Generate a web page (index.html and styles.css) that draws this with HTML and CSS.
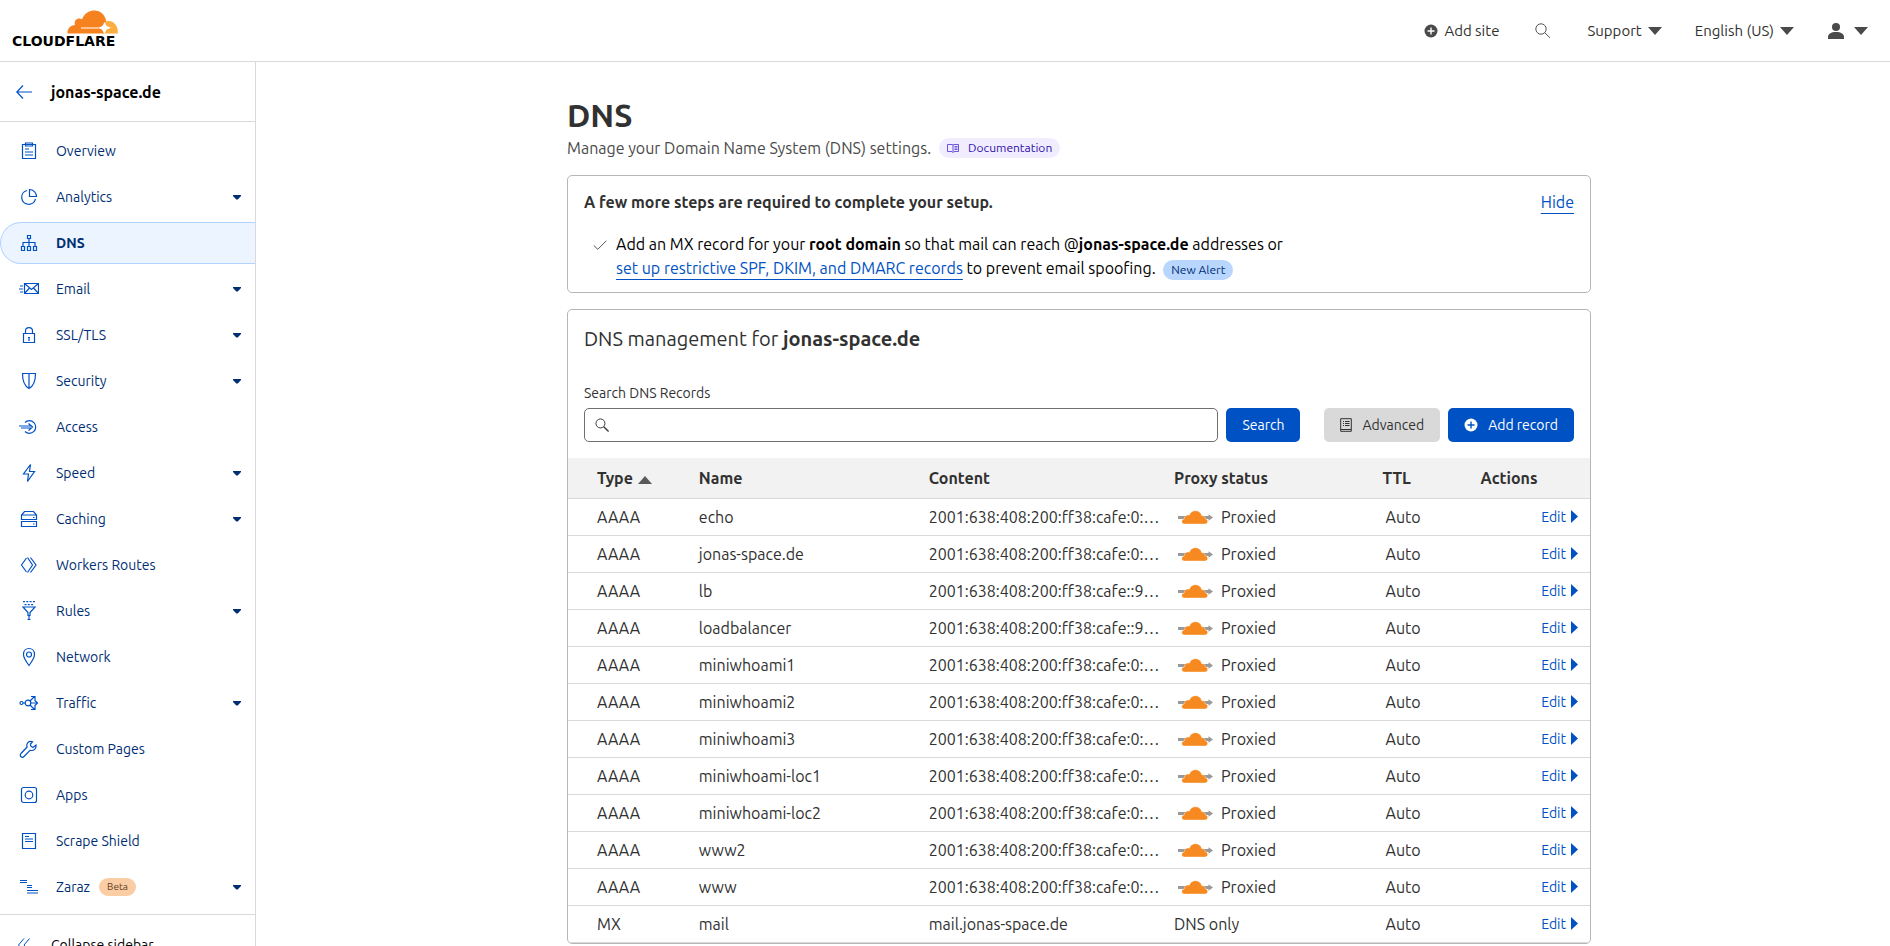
FILE: index.html
```
<!DOCTYPE html>
<html lang="en">
<head>
<meta charset="utf-8">
<title>DNS | jonas-space.de | Cloudflare</title>
<link rel="stylesheet" href="styles.css">
</head>
<body>
<svg class="sprite" aria-hidden="true">
  <symbol id="i-caret" viewBox="0 0 8 5"><path d="M0 0h8v1L4.700 4.500H3.300L0 1z"/></symbol>
  <symbol id="i-down" viewBox="0 0 14 8"><path d="M0 0h14L7 8z"/></symbol>
  <symbol id="i-plus" viewBox="0 0 14 14"><circle cx="7" cy="7" r="6.500"/><path d="M7 3.500v7M3.500 7h7" fill="none" stroke="var(--plus)" stroke-width="1.400"/></symbol>
  <symbol id="i-search" viewBox="0 0 16 16"><circle cx="5.800" cy="5.800" r="4.800" fill="none" stroke="currentColor"/><path d="M9.300 9.300l5.200 5" fill="none" stroke="currentColor" stroke-width="1.400"/></symbol>
  <symbol id="i-cloud" viewBox="0 0 35 14">
    <path d="M0 6h31v3H0zM30.500 4.200L35 7.500l-4.500 3.300z" fill="#999"/>
    <path d="M6.500 14C3 14 2.800 9.300 6.300 9c-.2-2.800 2.500-4.600 5-3.700C13-1 22.500-.8 23.800 5.800c2.400-.5 3.500 1.200 3.300 2.900 3.700.4 3.300 5.300-.1 5.300z" fill="#f6891f" stroke="#fff" stroke-width=".4"/>
  </symbol>
  <symbol id="i-right" viewBox="0 0 7 13"><path d="M0 0l7 6.500L0 13z"/></symbol>
</svg>

<div class="app">
  <header class="topbar">
    <a class="logo" href="#" aria-label="Cloudflare">
      <svg class="logo-cloud" viewBox="0 0 52 24" aria-hidden="true">
        <path d="M.5 23.500C.2 18.500 3.500 15.200 8 15 6.500 10 11 7 15 9.300 17.500 2.500 23 .4 27.500.4c6 0 10 4 11.500 9.600l-1.500 13.500z" fill="#f6821f"/>
        <path d="M36 23.500l3.500-12.700C46 10.500 51.500 15 50.700 23.500z" fill="#fbad41"/>
        <path d="M14 17.500h18l3.500-1.500 2-4 2 4 4.500 1.800-4.500 1.800-2 4.400-2.500-4.200-2-1.300H14z" fill="#fff"/>
      </svg>
      <span class="wordmark">CLOUDFLARE</span>
    </a>
    <nav class="tools" aria-label="Account">
      <button class="tool add-site" type="button"><svg class="plus" aria-hidden="true"><use href="#i-plus"/></svg>Add site</button>
      <button class="tool find" type="button" aria-label="Find"><svg viewBox="0 0 16 16" aria-hidden="true"><circle cx="6" cy="6" r="5.200"/><path d="M9.800 9.800l5.200 5"/></svg></button>
      <button class="tool support" type="button">Support<svg class="down" aria-hidden="true"><use href="#i-down"/></svg></button>
      <button class="tool language" type="button">English (US)<svg class="down" aria-hidden="true"><use href="#i-down"/></svg></button>
      <button class="tool user" type="button" aria-label="User menu"><svg class="person" viewBox="0 0 16 16" aria-hidden="true"><circle cx="8" cy="4" r="4"/><path d="M0 16v-2c0-3 3-5 8-5s8 2 8 5v2z"/></svg><svg class="down" aria-hidden="true"><use href="#i-down"/></svg></button>
    </nav>
  </header>

  <div class="body">
    <aside class="sidebar">
      <div class="site">
        <a class="back" href="#" aria-label="Back"><svg viewBox="0 0 16 14"><path d="M16 7H1M7 .5L.8 7 7 13.500"/></svg></a>
        <span class="site-name">jonas-space.de</span>
      </div>
      <nav class="menu" aria-label="Site">
        <a class="item" href="#"><svg class="icon" viewBox="0 0 20 20"><path d="M3.500 3.500h13v14h-13zM6.500 2h7v3h-7zM6 8h4M6 11h8M6 14h8"/></svg>Overview</a>
        <a class="item" href="#"><svg class="icon" viewBox="0 0 20 20"><path d="M8 3.500A7 7 0 1 0 16.500 12M10.500 2.500v7h7a7 7 0 0 0-7-7z"/></svg>Analytics<svg class="caret"><use href="#i-caret"/></svg></a>
        <a class="item active" href="#" aria-current="page"><svg class="icon" viewBox="0 0 20 20"><path d="M8.500 2.500h3v3h-3zM2.500 13.500h3v4h-3zM8.500 13.500h3v4h-3zM14.500 13.500h3v4h-3zM10 5.500v8M4 13.500v-4h12v4"/></svg>DNS</a>
        <a class="item" href="#"><svg class="icon" viewBox="0 0 20 20"><path d="M5.500 4.500h14v10h-14zM5.500 4.500l7 6 7-6M5.500 14.500l5-5.500M19.500 14.500l-5-5.500M1 7h3M0 10h4M1 13h3"/></svg>Email<svg class="caret"><use href="#i-caret"/></svg></a>
        <a class="item" href="#"><svg class="icon" viewBox="0 0 20 20"><path d="M4.500 8.500h11v9h-11zM6.500 8.500V6c0-4.500 7-4.500 7 0v2.500M10 13v3M9 12.500h2"/></svg>SSL/TLS<svg class="caret"><use href="#i-caret"/></svg></a>
        <a class="item" href="#"><svg class="icon" viewBox="0 0 20 20"><path d="M3.500 2.500h13c0 7-1 12-6.500 15C4.500 14.500 3.500 9.500 3.500 2.500zM10 2.500v15"/></svg>Security<svg class="caret"><use href="#i-caret"/></svg></a>
        <a class="item" href="#"><svg class="icon" viewBox="0 0 20 20"><path d="M6 5.500A6.300 6.300 0 1 1 6 14.500M0 9h12M2 11h10M9.500 6.500L13.500 10l-4 3.500"/></svg>Access</a>
        <a class="item" href="#"><svg class="icon" viewBox="0 0 20 20"><path d="M11.500 1.500l-7 9.500h5l-1 7.500 7-10h-5z"/></svg>Speed<svg class="caret"><use href="#i-caret"/></svg></a>
        <a class="item" href="#"><svg class="icon" viewBox="0 0 20 20"><path d="M2.500 10.500V6l3-3.500h9l3 3.500v4.500zM2.500 6h15M2.500 17.500v-5h15v5zM14 8.500h1.500M14 15h1.500"/></svg>Caching<svg class="caret"><use href="#i-caret"/></svg></a>
        <a class="item" href="#"><svg class="icon" viewBox="0 0 20 20"><path d="M7.500 3l-5 7 5 7M8.500 2.500l5 7.500-5 7.500M11.500 2.500l5.500 7.500-5.500 7.500"/></svg>Workers Routes</a>
        <a class="item" href="#"><svg class="icon" viewBox="0 0 20 20"><path d="M4 .7h12M5.500 3.700h9" stroke-dasharray="2 1.300"/><path d="M4 6h12l-5 5.500v3H9v-3zM10 15v4M8.500 18.500h3"/></svg>Rules<svg class="caret"><use href="#i-caret"/></svg></a>
        <a class="item" href="#"><svg class="icon" viewBox="0 0 20 20"><path d="M10 18.500C7 14.500 4.500 11 4.500 7.500c0-8 11-8 11 0 0 3.500-2.500 7-5.500 11z"/><circle cx="10" cy="7.500" r="2.500"/></svg>Network</a>
        <a class="item" href="#"><svg class="icon" viewBox="0 0 20 20"><circle cx="2.500" cy="10" r="1.500"/><circle cx="9" cy="10" r="2.800"/><path d="M4 10h2M12 10h6.500M11 8l4.500-4.500M11 12l4.500 4.500M12 3.500h4v4M12 16.500h4v-4M15.500 7l3 3-3 3"/></svg>Traffic<svg class="caret"><use href="#i-caret"/></svg></a>
        <a class="item" href="#"><svg class="icon" viewBox="0 0 20 20"><path d="M13.500 2.700c-4-1.200-6.500 2-5.400 5.300L2 14.500c-2 2.500 1 5 3 3l6-6.200c4.500 1 6.500-2.500 6-5.300l-3 2.500-2.300-1.500-.2-2z"/></svg>Custom Pages</a>
        <a class="item" href="#"><svg class="icon" viewBox="0 0 20 20"><rect x="2.500" y="2.500" width="15" height="15" rx="2"/><circle cx="10" cy="10" r="3.800"/></svg>Apps</a>
        <a class="item" href="#"><svg class="icon" viewBox="0 0 20 20"><path d="M3.500 2.500h13v15h-13zM6 5.500h4M6 8h8M6 10.500h8"/></svg>Scrape Shield</a>
        <a class="item" href="#"><svg class="icon" viewBox="0 0 20 20"><path d="M1 3.500h7M1 5.500h7M8 8.500h5M8 10.500h5M8 13.500h11M8 16h11"/></svg>Zaraz<span class="beta">Beta</span><svg class="caret"><use href="#i-caret"/></svg></a>
      </nav>
      <button class="collapse" type="button"><svg viewBox="0 0 16 14"><path d="M8 .5L2.500 7 8 13.500M13.500 .5L8 7l5.500 6.500"/></svg>Collapse sidebar</button>
    </aside>

    <main class="main">
      <div class="page">
        <h1>DNS</h1>
        <p class="lead">Manage your Domain Name System (DNS) settings.
          <a class="doc" href="#"><svg viewBox="0 0 12 10" aria-hidden="true"><path d="M.5 1.500h4.500l1 .5v7.500l-1-1H.5zM6 2l1-.5h4.500v7H7l-1 1M7.500 3.500h3M7.500 5h3M7.500 6.500h3"/></svg>Documentation</a>
        </p>

        <section class="card setup">
          <div class="setup-head">
            <h2>A few more steps are required to complete your setup.</h2>
            <a class="link" href="#">Hide</a>
          </div>
          <div class="step">
            <svg class="check" viewBox="0 0 14 10" aria-hidden="true"><path d="M.8 5.500l4 3.800L13.300.8"/></svg>
            <p>Add an MX record for your <b>root domain</b> so that mail can reach @<b>jonas-space.de</b> addresses or<br><a class="link" href="#">set up restrictive SPF, DKIM, and DMARC records</a> to prevent email spoofing. <span class="alert">New Alert</span></p>
          </div>
        </section>

        <section class="card records">
          <h2 class="records-title">DNS management for <b>jonas-space.de</b></h2>
          <form class="search">
            <label for="q">Search DNS Records</label>
            <div class="controls">
              <div class="field"><svg aria-hidden="true"><use href="#i-search"/></svg><input id="q" type="text"></div>
              <button class="btn primary submit" type="button">Search</button>
              <button class="btn neutral" type="button"><svg viewBox="0 0 12 14" aria-hidden="true"><path d="M.7.7h10.600v12.600H.7zM1 11.500h10M3 3.500h1M5 3.500h4.500M3 5.500h1M5 5.500h4.500M3 7.500h1M5 7.500h4.500"/></svg>Advanced</button>
              <button class="btn primary" type="button"><svg class="plus" aria-hidden="true"><use href="#i-plus"/></svg>Add record</button>
            </div>
          </form>
          <table>
            <colgroup><col class="c-type"><col class="c-name"><col class="c-content"><col class="c-proxy"><col class="c-ttl"><col></colgroup>
            <thead><tr><th>Type<svg class="sort" viewBox="0 0 14 8"><path d="M0 8h14L7 0z"/></svg></th><th>Name</th><th>Content</th><th>Proxy status</th><th>TTL</th><th>Actions</th></tr></thead>
            <tbody>
              <tr><td>AAAA</td><td>echo</td><td>2001:638:408:200:ff38:cafe:0:…</td><td><span class="proxied"><svg><use href="#i-cloud"/></svg>Proxied</span></td><td>Auto</td><td><a class="edit" href="#">Edit<svg><use href="#i-right"/></svg></a></td></tr>
              <tr><td>AAAA</td><td>jonas-space.de</td><td>2001:638:408:200:ff38:cafe:0:…</td><td><span class="proxied"><svg><use href="#i-cloud"/></svg>Proxied</span></td><td>Auto</td><td><a class="edit" href="#">Edit<svg><use href="#i-right"/></svg></a></td></tr>
              <tr><td>AAAA</td><td>lb</td><td>2001:638:408:200:ff38:cafe::9…</td><td><span class="proxied"><svg><use href="#i-cloud"/></svg>Proxied</span></td><td>Auto</td><td><a class="edit" href="#">Edit<svg><use href="#i-right"/></svg></a></td></tr>
              <tr><td>AAAA</td><td>loadbalancer</td><td>2001:638:408:200:ff38:cafe::9…</td><td><span class="proxied"><svg><use href="#i-cloud"/></svg>Proxied</span></td><td>Auto</td><td><a class="edit" href="#">Edit<svg><use href="#i-right"/></svg></a></td></tr>
              <tr><td>AAAA</td><td>miniwhoami1</td><td>2001:638:408:200:ff38:cafe:0:…</td><td><span class="proxied"><svg><use href="#i-cloud"/></svg>Proxied</span></td><td>Auto</td><td><a class="edit" href="#">Edit<svg><use href="#i-right"/></svg></a></td></tr>
              <tr><td>AAAA</td><td>miniwhoami2</td><td>2001:638:408:200:ff38:cafe:0:…</td><td><span class="proxied"><svg><use href="#i-cloud"/></svg>Proxied</span></td><td>Auto</td><td><a class="edit" href="#">Edit<svg><use href="#i-right"/></svg></a></td></tr>
              <tr><td>AAAA</td><td>miniwhoami3</td><td>2001:638:408:200:ff38:cafe:0:…</td><td><span class="proxied"><svg><use href="#i-cloud"/></svg>Proxied</span></td><td>Auto</td><td><a class="edit" href="#">Edit<svg><use href="#i-right"/></svg></a></td></tr>
              <tr><td>AAAA</td><td>miniwhoami-loc1</td><td>2001:638:408:200:ff38:cafe:0:…</td><td><span class="proxied"><svg><use href="#i-cloud"/></svg>Proxied</span></td><td>Auto</td><td><a class="edit" href="#">Edit<svg><use href="#i-right"/></svg></a></td></tr>
              <tr><td>AAAA</td><td>miniwhoami-loc2</td><td>2001:638:408:200:ff38:cafe:0:…</td><td><span class="proxied"><svg><use href="#i-cloud"/></svg>Proxied</span></td><td>Auto</td><td><a class="edit" href="#">Edit<svg><use href="#i-right"/></svg></a></td></tr>
              <tr><td>AAAA</td><td>www2</td><td>2001:638:408:200:ff38:cafe:0:…</td><td><span class="proxied"><svg><use href="#i-cloud"/></svg>Proxied</span></td><td>Auto</td><td><a class="edit" href="#">Edit<svg><use href="#i-right"/></svg></a></td></tr>
              <tr><td>AAAA</td><td>www</td><td>2001:638:408:200:ff38:cafe:0:…</td><td><span class="proxied"><svg><use href="#i-cloud"/></svg>Proxied</span></td><td>Auto</td><td><a class="edit" href="#">Edit<svg><use href="#i-right"/></svg></a></td></tr>
              <tr><td>MX</td><td>mail</td><td>mail.jonas-space.de</td><td>DNS only</td><td>Auto</td><td><a class="edit" href="#">Edit<svg><use href="#i-right"/></svg></a></td></tr>
            </tbody>
          </table>
        </section>
      </div>
    </main>
  </div>
</div>
</body>
</html>
```
FILE: styles.css
```
* { box-sizing: border-box; }
body {
  margin: 0;
  background: #fff;
  color: #313131;
  font: 16px/24px Ubuntu, "Noto Sans", "Open Sans", sans-serif;
}
h1, h2, p { margin: 0; }
button { font: inherit; color: inherit; background: none; border: 0; padding: 0; }
a { text-decoration: none; color: inherit; }
svg { flex: none; fill: currentColor; }
.sprite { position: absolute; width: 0; height: 0; }

.app { display: flex; flex-direction: column; height: 100vh; overflow: hidden; }

/* Top bar */
.topbar {
  flex: none;
  display: flex;
  justify-content: space-between;
  height: 62px;
  padding: 0 22px 0 12px;
  border-bottom: 1px solid #d9d9d9;
}
.logo { display: flex; flex-direction: column; padding-top: 10px; color: #000; }
.logo-cloud { width: 52px; height: 24px; margin-left: 55px; }
.wordmark { font: bold 14px/14px "DejaVu Sans", sans-serif; }
.tools { display: flex; align-items: center; font-size: 15px; color: #313131; }
.tool { display: flex; align-items: center; gap: 6px; }
.tool svg { color: #4a4a4a; }
.plus { width: 14px; height: 14px; --plus: #fff; }
.down { width: 14px; height: 8px; }
.find { margin: 0 36px; }
.find svg { width: 16px; height: 16px; fill: none; stroke: #555; }
.support { margin-right: 33px; }
.language { margin-right: 34px; }
.user { gap: 10px; }
.person { width: 16px; height: 16px; }

/* Sidebar */
.body { flex: 1; display: flex; min-height: 0; }
.sidebar {
  flex: none;
  width: 256px;
  overflow: hidden;
  border-right: 1px solid #d9d9d9;
}
.site {
  display: flex;
  align-items: center;
  height: 60px;
  padding-left: 16px;
  border-bottom: 1px solid #d9d9d9;
  color: #000;
  font-weight: bold;
}
.back { display: flex; width: 35px; }
.back svg { width: 16px; height: 14px; fill: none; stroke: #0051c3; stroke-width: 1.2; }
.menu {
  display: flex;
  flex-direction: column;
  gap: 4px;
  padding: 8px 0 6px;
  border-bottom: 1px solid #d9d9d9;
}
.item {
  display: flex;
  align-items: center;
  height: 42px;
  padding: 0 14px 0 18px;
  border: 1px solid transparent;
  border-right: 0;
  border-radius: 21px 0 0 21px;
  color: #002e73;
  font-size: 14px;
}
.active { background: #ebf4ff; border-color: #b2d3ff; font-weight: bold; }
.icon { width: 20px; height: 20px; margin-right: 17px; fill: none; stroke: #0051c3; stroke-width: 1.200; }
.caret { width: 8px; height: 5px; margin-left: auto; }
.beta {
  margin-left: 9px;
  padding: 0 8px;
  border-radius: 9px;
  background: #fbcda5;
  color: #5c3a1b;
  font-size: 10px;
  line-height: 18px;
}
.collapse {
  display: flex;
  align-items: center;
  gap: 19px;
  width: 100%;
  height: 60px;
  padding-left: 16px;
  color: #000;
  font-size: 14px;
}
.collapse svg { width: 16px; height: 14px; fill: none; stroke: #0051c3; }

/* Page */
.main { flex: 1; min-width: 0; padding: 32px 0 0 12px; }
.page { max-width: 1024px; margin: 0 auto; }
h1 { font-size: 32px; line-height: 42px; }
.lead { display: flex; align-items: center; gap: 8px; color: #4a4a4a; }
.doc {
  display: flex;
  align-items: center;
  gap: 9px;
  padding: 0 8px;
  border-radius: 10px;
  background: #f1edff;
  color: #2c0ea8;
  font-size: 12px;
  line-height: 20px;
}
.doc svg { width: 12px; height: 10px; fill: none; stroke: #6b54d6; }

.card { border: 1px solid #b6b6b6; border-radius: 5px; overflow: hidden; margin-bottom: 16px; }
.setup { margin-top: 15px; padding: 14px 16px 12px; }
.setup-head { display: flex; justify-content: space-between; margin-bottom: 18px; }
.setup-head h2 { font-size: 16px; line-height: 24px; }
.link { color: #0051c3; text-decoration: underline; text-underline-offset: 5px; text-decoration-thickness: 1px; text-decoration-skip-ink: none; }
.step { display: flex; gap: 9px; padding-left: 9px; color: #000; }
.check { width: 14px; height: 10px; margin-top: 8px; fill: none; stroke: #555; }
.alert {
  display: inline-block;
  margin-left: 4px;
  padding: 0 8px;
  border-radius: 10px;
  background: #b9d6ff;
  color: #002e73;
  font-size: 12px;
  line-height: 20px;
}

.records-title { padding: 15px 16px 0; font-size: 20px; line-height: 28px; font-weight: normal; }
.search { padding: 30px 16px 16px; font-size: 14px; }
.search label { display: block; line-height: 20px; margin-bottom: 5px; }
.controls { display: flex; align-items: center; gap: 8px; }
.field {
  flex: 1;
  display: flex;
  align-items: center;
  height: 34px;
  padding-left: 10px;
  border: 1px solid #6f6f6f;
  border-radius: 5px;
}
.field svg { width: 15px; height: 15px; }
.field input { flex: 1; min-width: 0; border: 0; outline: 0; background: none; font: inherit; padding: 0 8px; }
.btn { display: flex; align-items: center; gap: 10px; height: 34px; padding: 0 16px; border-radius: 5px; }
.primary { background: #0051c3; color: #fff; }
.primary .plus { --plus: #0051c3; }
.submit { margin-right: 16px; }
.neutral { background: #d9d9d9; }
.neutral svg { width: 12px; height: 14px; fill: none; stroke: #313131; }

table { width: 100%; border-collapse: collapse; table-layout: fixed; }
.c-type { width: 12.8%; }
.c-name { width: 22.5%; }
.c-content { width: 24%; }
.c-proxy { width: 20.4%; }
.c-ttl { width: 9.6%; }
th, td { padding: 0; text-align: left; white-space: nowrap; border-bottom: 1px solid #d9d9d9; }
th { height: 40px; background: #f2f2f2; }
td { height: 37px; }
th:first-child, td:first-child { padding-left: 29px; }
td:nth-child(5) { padding-left: 3px; }
td:last-child { padding-right: 12px; }
.sort { width: 14px; height: 8px; margin-left: 5px; fill: #595959; }
.proxied { display: flex; align-items: center; gap: 8px; padding-left: 4px; }
.proxied svg { width: 35px; height: 14px; }
.edit { display: flex; align-items: center; justify-content: flex-end; gap: 5px; color: #0051c3; font-size: 14px; }
.edit svg { width: 7px; height: 13px; }
```
